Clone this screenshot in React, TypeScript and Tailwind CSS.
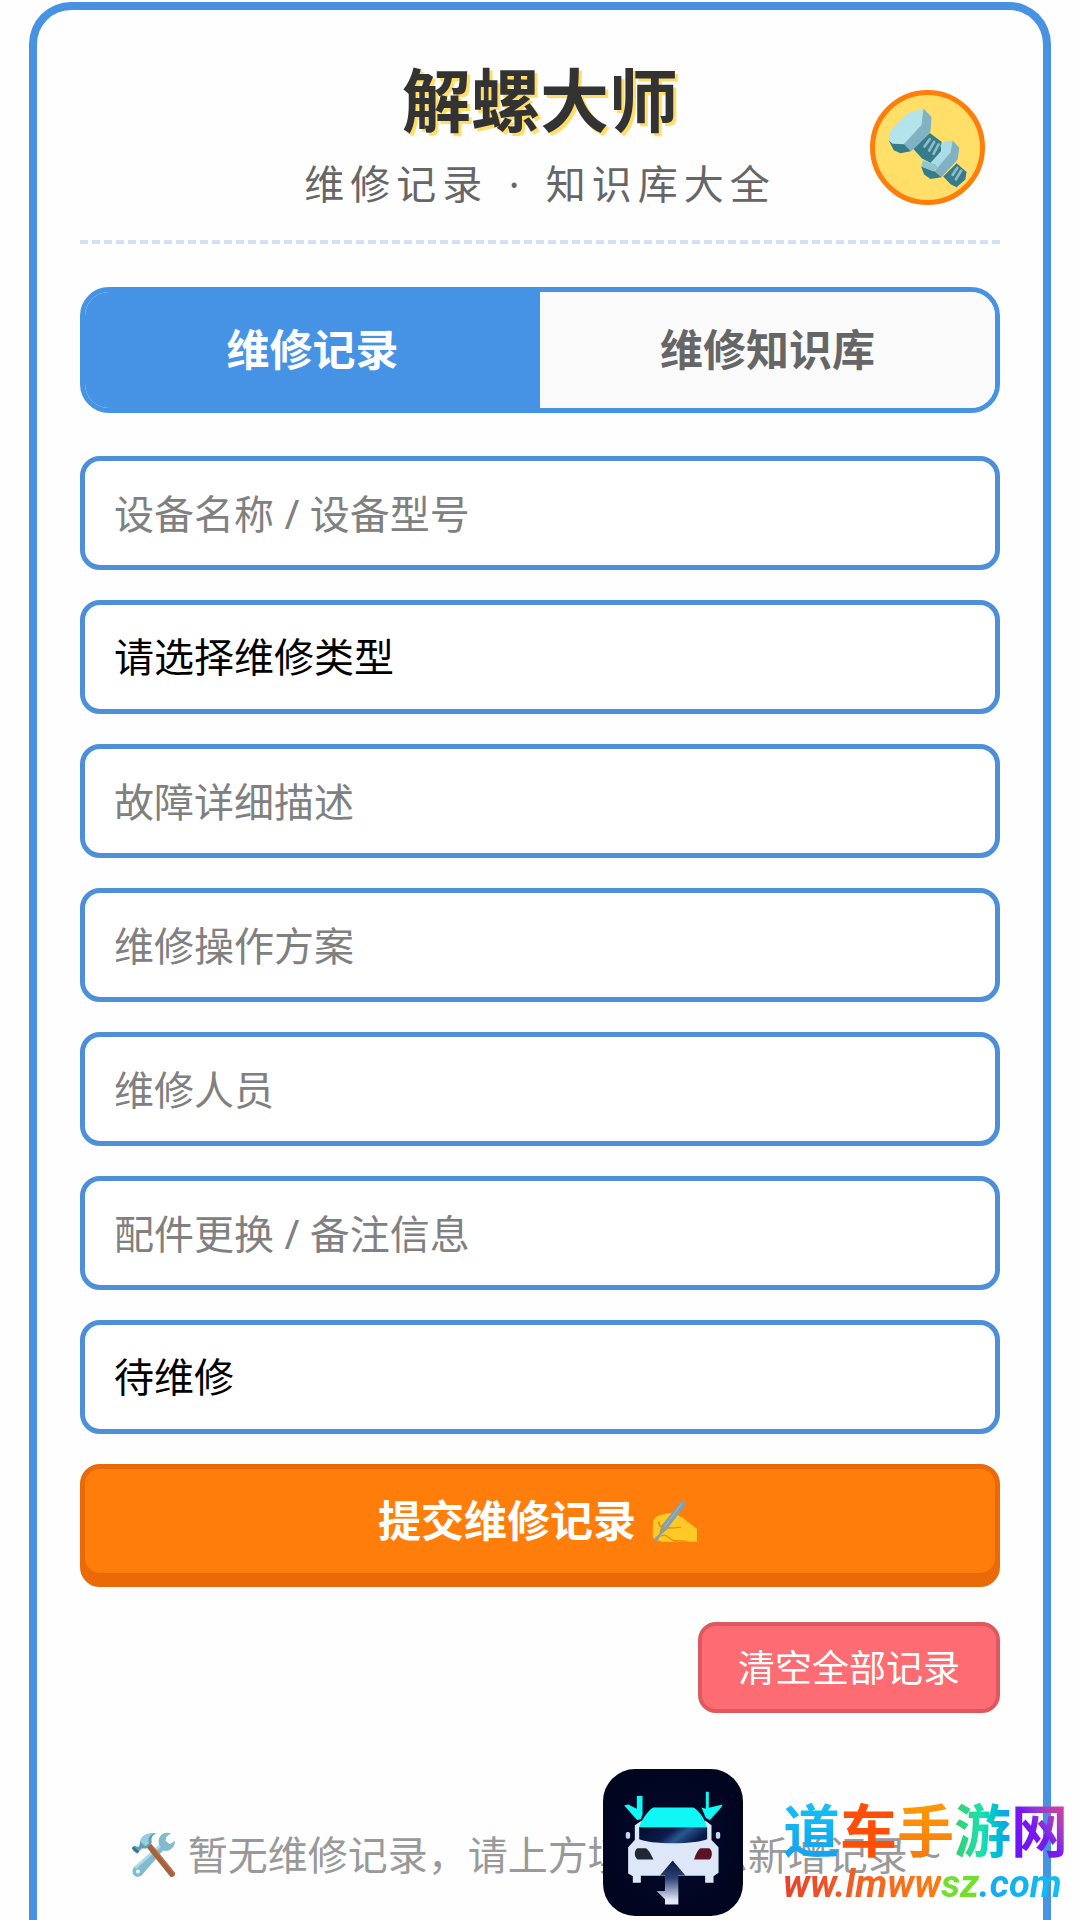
import { useState } from 'react';

const tabs = ['维修记录', '维修知识库'];

const repairTypes = ['请选择维修类型', '机械维修', '电路维修', '日常保养'];
const statuses = ['待维修', '维修中', '已完成'];

const controlClass =
  'block w-full h-[114px] px-[29px] rounded-[20px] border-[5px] border-[#4d90d8] bg-white text-[40px] leading-[60px] text-black placeholder:text-[#808080] placeholder:opacity-100 outline-none';

function BoltIcon() {
  return (
    <svg viewBox="74 74 314 314" className="w-full h-full" aria-hidden="true">
      <path d="M238 188 273 214 271 248 240 277 214 263 188 235Z" fill="#367c8b" />
      <path d="M238 206 222 228M251 214 236 240M264 222 249 250" stroke="#8dbbc9" strokeWidth="8" strokeLinecap="round" />
      <path d="M218 114 172 128 119 182 115 210 126 222 161 222 214 164Z" fill="#b4e4eb" />
      <path d="M219 114 243 140 240 184 204 222 181 243 160 221 213 164Z" fill="#81b2c3" />
      <path d="M115 210 127 220 161 221 181 242 150 248 130 239Z" fill="#367c8b" />
      <path d="M318 278 348 304 344 327 318 350 300 341 278 318Z" fill="#367c8b" />
      <path d="M320 292 306 313M332 300 316 326" stroke="#8dbbc9" strokeWidth="8" strokeLinecap="round" />
      <path d="M306 210 281 214 270 224 273 240 240 277 218 268 212 288 264 292 300 246Z" fill="#a9dce5" />
      <path d="M306 210 326 232 321 267 273 320 252 302 264 288 300 246Z" fill="#7fb1c2" />
      <path d="M212 288 252 302 273 320 240 325 221 312Z" fill="#367c8b" />
      <path d="M238 277 255 281 262 291 248 303 213 288 217 270Z" fill="#91c4d1" />
    </svg>
  );
}

function WritingHandIcon() {
  return (
    <svg viewBox="214 180 140 130" className="w-[46px] h-[43px]" aria-hidden="true">
      <path
        d="M234 227C222 232 217 240 217 251L216 290C219 300 226 306 236 303 244 309 252 309 258 306 266 309 276 308 282 305L351 307V267C336 257 322 244 308 234 292 223 278 219 262 219Z"
        fill="#ffc928"
      />
      <path d="M233 248C238 267 262 267 301 262M240 290C262 278 267 304 283 303L320 305" fill="none" stroke="#e59500" strokeWidth="4" strokeLinecap="round" />
      <path d="M309 181C316 181 320 187 316 194L259 270 240 286 232 302 221 307 222 296 236 283 242 259 299 187Z" fill="#82a0ad" />
      <path d="M305 190 252 261" stroke="#a3bac4" strokeWidth="3" />
      <path d="M236 245C234 258 242 266 252 267" fill="none" stroke="#e59500" strokeWidth="4" />
    </svg>
  );
}

function ToolsIcon() {
  return (
    <svg viewBox="198 158 132 136" className="w-[45px] h-[46px]" aria-hidden="true">
      <path
        d="M316 162C298 156 279 166 279 186L281 197 205 264C198 276 204 291 219 290 226 290 230 286 234 281L292 213C310 217 326 207 328 184L312 194 300 184 302 172Z"
        fill="#82bbd0"
      />
      <path d="M283 199 210 264" stroke="#a9dbe8" strokeWidth="8" />
      <circle cx="218" cy="275" r="6" fill="#e9f6f8" />
      <path d="M243 202 257 193 327 278C330 286 324 293 314 290Z" fill="#a7623d" />
      <path d="M263 202 325 279" stroke="#bd7850" strokeWidth="4" />
      <path d="M200 205 207 199 220 202 223 195C225 170 243 159 273 162 257 169 257 178 259 190L243 207 229 207 217 221C208 218 202 213 200 205Z" fill="#5c9fb7" />
      <path d="M225 187C230 168 246 161 265 162 250 169 247 178 251 191L240 200Z" fill="#98cddd" />
      <path d="M200 205 205 201 221 215 217 222Z" fill="#2f7889" />
    </svg>
  );
}

function CarLogo() {
  return (
    <svg viewBox="37 28 418 439" className="w-[140px] h-[147px] shrink-0" aria-hidden="true">
      <defs>
        <radialGradient id="logoBg">
          <stop offset="0" stopColor="#030a2e" />
          <stop offset="1" stopColor="#010520" />
        </radialGradient>
        <linearGradient id="logoGlass" x1="0" y1="0" x2="1" y2="0.3">
          <stop offset="0" stopColor="#050c2c" />
          <stop offset="0.5" stopColor="#0b1d4c" />
          <stop offset="0.7" stopColor="#2a5790" />
          <stop offset="1" stopColor="#0a1b48" />
        </linearGradient>
        <linearGradient id="logoArrow" x1="0" y1="0" x2="0" y2="1">
          <stop offset="0" stopColor="#091844" />
          <stop offset="0.4" stopColor="#2c4174" />
          <stop offset="0.9" stopColor="#e3e7f6" />
        </linearGradient>
      </defs>
      <rect x="37" y="28" width="418" height="439" rx="96" fill="url(#logoBg)" />
      <path d="M138 109H155V163L150 178 139 180 100 137 112 134 138 147Z" fill="#10f8f5" />
      <path d="M344 96H353V144L394 134 390 143 356 180 344 174 331 143 344 147Z" fill="#10f8f5" />
      <path d="M151 183 132 196V240L112 262V340L126 348V368H150V347H342V368H367V348L382 338V262L361 240V196L344 183Z" fill="#dde7f8" />
      <path d="M188 143H306C316 145 344 178 347 201H145C150 182 177 145 188 143Z" fill="#10f8f5" />
      <path d="M145 202H348V238C333 244 295 250 247 250 198 250 160 245 145 238Z" fill="url(#logoGlass)" />
      <rect x="105" y="216" width="13" height="20" rx="5" fill="#cbd6eb" />
      <rect x="374" y="216" width="13" height="20" rx="5" fill="#cbd6eb" />
      <path d="M139 265H165C174 270 181 285 188 298H140C130 292 129 273 139 265Z" fill="#202735" />
      <path d="M328 265H354C365 272 364 290 356 298H309C313 285 320 270 328 265Z" fill="#5c1325" />
      <path d="M245 301 283 346H262V433H222V417L197 392H222V346H207Z" fill="url(#logoArrow)" />
    </svg>
  );
}

function SiteMark() {
  return (
    <div className="fixed right-3 bottom-1 flex items-end gap-10 pointer-events-none">
      <CarLogo />
      <div className="pb-3 font-bold whitespace-nowrap">
        <div className="flex text-[57px] leading-[68px]">
          <span className="text-transparent bg-clip-text bg-linear-to-b from-[#16c4f5] to-[#159fee]">道</span>
          <span className="text-[#ff4e05]">车</span>
          <span className="text-transparent bg-clip-text bg-linear-to-b from-[#ff9d00] to-[#f5780f]">手</span>
          <span className="text-transparent bg-clip-text bg-linear-to-r from-[#35cf69] via-[#18e0b0] to-[#1699ef]">游</span>
          <span className="text-transparent bg-clip-text bg-linear-to-tr from-[#6a10ff] via-[#7b18ee] to-[#f52c78]">网</span>
        </div>
        <div className="flex font-['Roboto',sans-serif] text-[38px] leading-[40px] italic">
          <span className="text-transparent bg-clip-text bg-linear-to-r from-[#e8402c] to-[#fb7d10]">ww.lmww</span>
          <span className="text-[#72df2c]">sz</span>
          <span className="text-transparent bg-clip-text bg-linear-to-r from-[#12a9f0] to-[#14bdf2]">.com</span>
        </div>
      </div>
    </div>
  );
}

export default function App() {
  const [activeTab, setActiveTab] = useState(tabs[0]);

  return (
    <div className="min-h-screen flex flex-col bg-[#fefefe] px-[29px] pt-[2px] font-['Noto_Sans','Noto_Sans_CJK_SC',sans-serif]">
      <main className="flex-1 border-8 border-b-0 border-[#4892e2] rounded-t-[42px] px-[43px] pt-[48px] pb-[35px]">
        {/* Header */}
        <header className="relative text-center border-b-4 border-dashed border-[#d0e2f3] pb-[26px] mb-[43px]">
          <h1 className="text-[69px] leading-[84px] font-bold text-[#333333] [text-shadow:3px_3px_0_#ffdd66]">解螺大师</h1>
          <p className="mt-3 text-[40px] leading-[60px] tracking-[6px] text-[#666666]">
            维修记录 <span className="mx-1">·</span> 知识库大全
          </p>
          <div className="absolute right-[15px] top-8 w-[115px] h-[115px] rounded-full border-[5px] border-[#ff7d0b] bg-[#ffdf68]">
            <BoltIcon />
          </div>
        </header>

        {/* Tabs */}
        <div className="flex h-[126px] mb-[43px] rounded-[29px] border-[5px] border-[#4693e4] overflow-hidden">
          {tabs.map(tab => (
            <button
              key={tab}
              onClick={() => setActiveTab(tab)}
              className={`flex-1 text-[43px] font-bold ${
                activeTab === tab ? 'bg-[#4693e6] text-white' : 'bg-[#fafafa] text-[#666666]'
              }`}
            >
              {tab}
            </button>
          ))}
        </div>

        {/* Repair form */}
        <form className="flex flex-col gap-[30px]" onSubmit={e => e.preventDefault()}>
          <input aria-label="设备名称 / 设备型号" placeholder="设备名称 / 设备型号" className={controlClass} />
          <select aria-label="维修类型" className={`appearance-none ${controlClass}`}>
            {repairTypes.map(type => <option key={type}>{type}</option>)}
          </select>
          <input aria-label="故障详细描述" placeholder="故障详细描述" className={controlClass} />
          <input aria-label="维修操作方案" placeholder="维修操作方案" className={controlClass} />
          <input aria-label="维修人员" placeholder="维修人员" className={controlClass} />
          <input aria-label="配件更换 / 备注信息" placeholder="配件更换 / 备注信息" className={controlClass} />
          <select aria-label="维修状态" className={`appearance-none ${controlClass}`}>
            {statuses.map(status => <option key={status}>{status}</option>)}
          </select>
          <button
            type="submit"
            className="flex items-center justify-center gap-4 h-[123px] pb-2 pr-1 rounded-[20px] border-[5px] border-[#ea6a0a] bg-[#ff7d0b] text-[43px] font-bold text-white shadow-[inset_0_-9px_0_#ea6a0a]"
          >
            提交维修记录
            <WritingHandIcon />
          </button>
        </form>

        <div className="flex justify-end mt-[35px]">
          <button className="h-[91px] px-9 rounded-[18px] border-4 border-[#e0585f] bg-[#fc6c72] text-[37px] text-white">
            清空全部记录
          </button>
        </div>

        {/* Empty state */}
        <p className="flex items-center justify-center gap-3 mt-28 pr-2 text-[40px] leading-[60px] text-[#999999] whitespace-nowrap">
          <ToolsIcon />
          暂无维修记录，请上方填写信息新增记录 ~
        </p>
      </main>
      <SiteMark />
    </div>
  );
}
